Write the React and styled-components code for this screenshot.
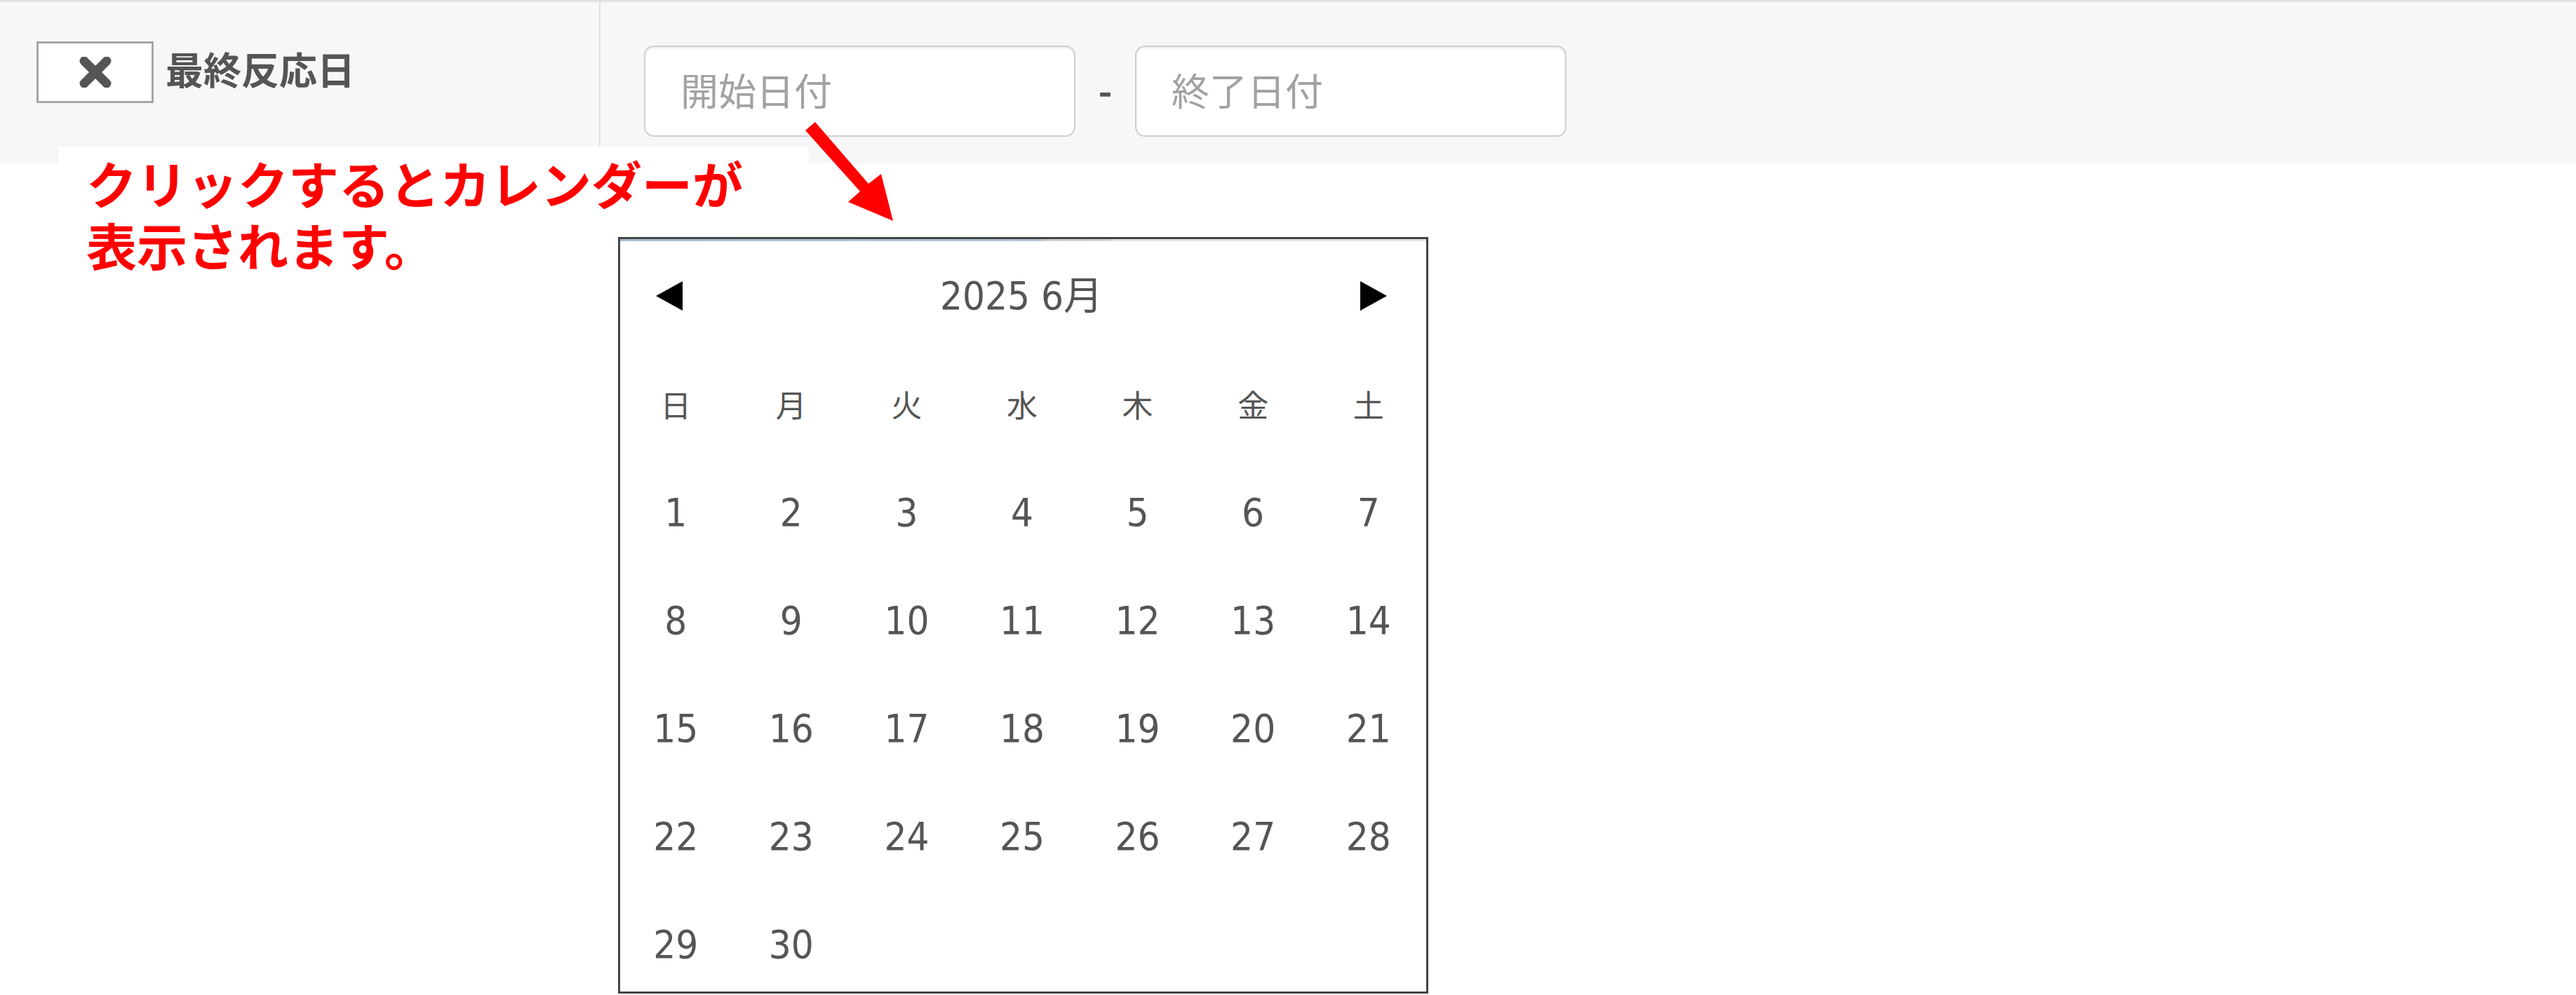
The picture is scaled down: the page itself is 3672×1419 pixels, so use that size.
import React from 'react';
import styled, { createGlobalStyle } from 'styled-components';

const GlobalStyle = createGlobalStyle`
  html, body {
    margin: 0;
    padding: 0;
    background: #ffffff;
  }
  body {
    font-family: "Noto Sans CJK JP", "Noto Sans", sans-serif;
  }
`;

const Page = styled.div`
  position: relative;
  width: 100%;
  min-height: 1419px;
  background: #ffffff;
  overflow: hidden;
`;

const FilterBar = styled.div`
  display: flex;
  box-sizing: border-box;
  height: 233px;
  border-top: 3px solid #e2e2e4;
  background: #f7f7f9;
`;

const LabelCell = styled.div`
  box-sizing: border-box;
  width: 856px;
  padding: 56px 0 0 52px;
  border-right: 2px solid #e0e0e2;
  display: flex;
  align-items: flex-start;
  gap: 17px;
`;

const ClearButton = styled.button`
  box-sizing: border-box;
  width: 167px;
  height: 88px;
  padding: 0;
  border: 3px solid #a6a6a6;
  background: #ffffff;
  display: flex;
  align-items: center;
  justify-content: center;
  cursor: pointer;
`;

const FieldLabel = styled.span`
  font-size: 54px;
  font-weight: 700;
  color: #555555;
  line-height: 78px;
`;

const InputCell = styled.div`
  flex: 1;
  padding: 62px 0 0 62px;
`;

const DateRange = styled.div`
  display: flex;
  align-items: center;
`;

const DateInput = styled.input`
  box-sizing: border-box;
  width: 615px;
  height: 130px;
  padding: 0 0 6px 50px;
  border: 2px solid #cfcfcf;
  border-radius: 14px;
  background: #ffffff;
  box-shadow: inset 0 2px 3px rgba(0, 0, 0, 0.07);
  font-family: "Noto Sans CJK JP", sans-serif;
  font-size: 54px;
  color: #555555;
  outline: none;

  &::placeholder {
    color: #a2a2a2;
  }
`;

const Dash = styled.span`
  width: 85px;
  padding-bottom: 8px;
  text-align: center;
  font-size: 54px;
  font-weight: 700;
  color: #555555;
  font-family: "Noto Sans CJK JP", sans-serif;
`;

const Callout = styled.div`
  position: absolute;
  left: 83px;
  top: 209px;
  width: 1070px;
  height: 200px;
  box-sizing: border-box;
  padding: 7px 0 0 40px;
  background: #ffffff;
  color: #ff0000;
  font-size: 72px;
  font-weight: 700;
  z-index: 1;
`;

const CalloutLine = styled.div`
  height: 88px;
  line-height: 88px;
  white-space: nowrap;
`;

const PointerArrow = styled.svg`
  position: absolute;
  left: 1140px;
  top: 165px;
  z-index: 3;
`;

const Calendar = styled.div`
  position: absolute;
  left: 881px;
  top: 338px;
  width: 1155px;
  height: 1079px;
  box-sizing: border-box;
  border: 3px solid #444444;
  background: #ffffff;
  overflow: hidden;
  z-index: 2;
  color: #555555;
  font-family: "DejaVu Sans Condensed", "Noto Sans CJK JP", sans-serif;

  &::before {
    content: "";
    position: absolute;
    left: 0;
    right: 0;
    top: 0;
    height: 3px;
    background: linear-gradient(
      to right,
      #a9bed3 0,
      #b4c4d4 52.5%,
      #cdcdcd 52.5%,
      #d4d4d4 60.8%,
      #e2e2e2 60.8%
    );
  }
`;

const CalHeader = styled.div`
  display: flex;
  align-items: center;
  justify-content: space-between;
  height: 154px;
  margin-top: 4px;
  padding: 0 56px 0 51px;
`;

const NavArrow = styled.svg`
  display: block;
  cursor: pointer;
`;

const MonthTitle = styled.span`
  font-size: 56px;
  padding-bottom: 12px;
`;

const DayGrid = styled.div`
  display: grid;
  grid-template-columns: repeat(7, 1fr);
  grid-auto-rows: 154px;
  margin-left: -3px;
`;

const Cell = styled.div`
  display: flex;
  align-items: center;
  justify-content: center;
  font-size: ${p => (p.$head ? '44px' : '56px')};
  cursor: ${p => (p.$head ? 'default' : 'pointer')};
`;

const weekdays = ['日', '月', '火', '水', '木', '金', '土'];
const days = Array.from({ length: 30 }, (_, i) => i + 1);

const App = () => {
  return (
    <Page>
      <GlobalStyle />
      <FilterBar>
        <LabelCell>
          <ClearButton aria-label="clear">
            <svg width="48" height="44" viewBox="0 0 48 44">
              <path
                d="M8 6 L40 38 M40 6 L8 38"
                stroke="#555555"
                strokeWidth="13"
                strokeLinecap="round"
              />
            </svg>
          </ClearButton>
          <FieldLabel>最終反応日</FieldLabel>
        </LabelCell>
        <InputCell>
          <DateRange>
            <DateInput type="text" placeholder="開始日付" />
            <Dash>-</Dash>
            <DateInput type="text" placeholder="終了日付" />
          </DateRange>
        </InputCell>
      </FilterBar>

      <Callout>
        <CalloutLine>クリックするとカレンダーが</CalloutLine>
        <CalloutLine>表示されます。</CalloutLine>
      </Callout>

      <PointerArrow width="150" height="160" viewBox="0 0 150 160">
        <polygon
          points="8,21 22,9 98,97 116,83 133,150 69,123 86,108"
          fill="#ff0000"
        />
      </PointerArrow>

      <Calendar>
        <CalHeader>
          <NavArrow width="38" height="42" viewBox="0 0 38 42">
            <polygon points="38,0 38,42 0,21" fill="#000000" />
          </NavArrow>
          <MonthTitle>2025 6月</MonthTitle>
          <NavArrow width="38" height="42" viewBox="0 0 38 42">
            <polygon points="0,0 0,42 38,21" fill="#000000" />
          </NavArrow>
        </CalHeader>
        <DayGrid>
          {weekdays.map(w => (
            <Cell key={w} $head>{w}</Cell>
          ))}
          {days.map(d => (
            <Cell key={d}>{d}</Cell>
          ))}
        </DayGrid>
      </Calendar>
    </Page>
  );
};

export default App;
